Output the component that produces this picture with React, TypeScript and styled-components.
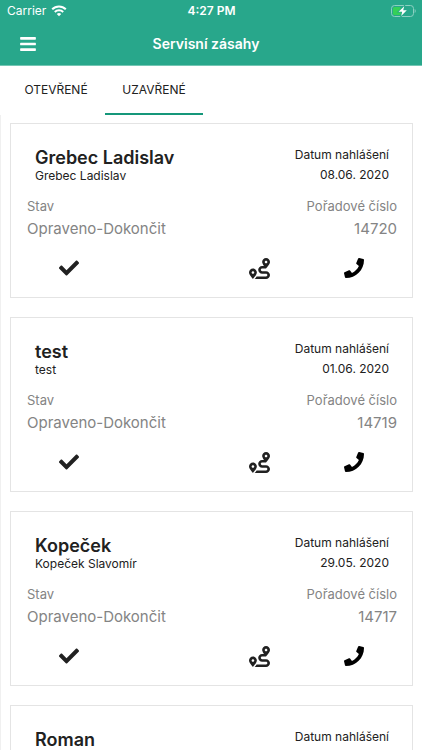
import React, { useState } from "react";
import styled, { createGlobalStyle } from "styled-components";
import { FaBars, FaCheck, FaPhone, FaRoute } from "react-icons/fa";

const GlobalStyle = createGlobalStyle`
  * { box-sizing: border-box; }
  html, body, #root { height: 100%; }
  body {
    margin: 0;
    background: #fff;
    color: #212121;
    font-family: Inter, "Liberation Sans", sans-serif;
  }
  h1, h2, p, dl, dt, dd, ul { margin: 0; padding: 0; }
  button { border: 0; background: none; padding: 0; font: inherit; color: inherit; cursor: pointer; }
`;

const Screen = styled.div`
  display: flex;
  flex-direction: column;
  height: 100vh;
  overflow: hidden;
`;

const Header = styled.header`
  flex: none;
  background: #28a78b;
  border-bottom: 1px solid #74c6b4;
  color: #fff;
`;

const StatusBar = styled.div`
  display: grid;
  grid-template-columns: 1fr auto 1fr;
  align-items: center;
  height: 22px;
  padding: 0 6px 0 7px;
  font-size: 12px;
  line-height: 16px;
`;

const Carrier = styled.div`
  display: flex;
  align-items: center;
  gap: 5px;
`;

const Clock = styled.div`
  font-weight: 600;
`;

const BatteryIcon = styled.svg`
  justify-self: end;
`;

const NavBar = styled.div`
  display: grid;
  grid-template-columns: 56px 1fr 66px;
  align-items: center;
  height: 43px;
`;

const MenuButton = styled.button`
  display: flex;
  align-items: center;
  justify-content: center;
  height: 42px;
`;

const PageTitle = styled.h1`
  text-align: center;
  font-size: 14px;
  line-height: 20px;
  font-weight: 600;
`;

const Tabs = styled.div`
  display: flex;
  flex: none;
  padding-left: 7px;
`;

const Tab = styled.button<{ $active: boolean }>`
  min-width: 98px;
  height: 49px;
  padding: 0 16px;
  border-bottom: 2px solid ${(p) => (p.$active ? "#15977a" : "transparent")};
  font-size: 12px;
  line-height: 16px;
`;

const List = styled.ul`
  flex: 1;
  min-height: 0;
  overflow: hidden;
  display: flex;
  flex-direction: column;
  gap: 19px;
  padding: 8px 9px 8px;
  border-left: 1px solid #f0f0f0;
  list-style: none;
`;

const Card = styled.li`
  flex: none;
  min-height: 175px;
  padding: 21px 15px 15px 16px;
  border: 1px solid #e4e4e4;
`;

const CardHead = styled.div`
  display: flex;
  justify-content: space-between;
  align-items: flex-start;
  padding: 0 8px;
`;

const Name = styled.h2`
  padding-top: 3px;
  font-size: 18px;
  line-height: 20px;
  font-weight: 600;
`;

const Contact = styled.p`
  font-size: 12px;
  line-height: 16px;
`;

const Reported = styled.div`
  text-align: right;
  font-size: 12px;
  line-height: 20px;
`;

const Facts = styled.dl`
  display: flex;
  justify-content: space-between;
  padding-top: 11px;
  color: #848484;
`;

const Fact = styled.div<{ $end?: boolean }>`
  text-align: ${(p) => (p.$end ? "right" : "left")};
`;

const Label = styled.dt`
  font-size: 13px;
  line-height: 20px;
`;

const Value = styled.dd`
  font-size: 15px;
  line-height: 26px;
`;

const Actions = styled.div`
  display: grid;
  grid-template-columns: 84px 1fr 86px;
  padding-top: 12px;
`;

const Action = styled.button<{ $end?: boolean }>`
  display: flex;
  align-items: center;
  justify-content: ${(p) => (p.$end ? "flex-end" : "center")};
  height: 28px;
  padding-right: ${(p) => (p.$end ? "41px" : "0")};
  color: ${(p) => p.color || "#212121"};
`;

type Job = { name: string; contact?: string; date?: string; number?: string };

const jobs: Job[] = [
  { name: "Grebec Ladislav", contact: "Grebec Ladislav", date: "08.06. 2020", number: "14720" },
  { name: "test", contact: "test", date: "01.06. 2020", number: "14719" },
  { name: "Kopeček", contact: "Kopeček Slavomír", date: "29.05. 2020", number: "14717" },
  { name: "Roman" },
];

function Wifi() {
  return (
    <svg width="16" height="12" viewBox="0 0 16 12" fill="none" stroke="#fff" strokeWidth="2" aria-hidden="true">
      <path d="M1.2 4.3a9.6 9.6 0 0 1 13.6 0" />
      <path d="M3.8 7a6 6 0 0 1 8.4 0" />
      <path d="M5.8 9a3.1 3.1 0 0 1 4.4 0L8 11.2Z" fill="#fff" stroke="none" />
    </svg>
  );
}

function Battery() {
  return (
    <BatteryIcon width="25" height="12" viewBox="0 0 25 12" role="img" aria-label="Baterie">
      <rect x=".5" y=".5" width="22" height="11" rx="3" fill="none" stroke="#8dd0c2" />
      <path d="M23.7 4v4c1.3-.5 1.3-3.5 0-4Z" fill="#8dd0c2" />
      <rect x="2" y="2" width="8" height="8" rx="1.5" fill="#35d058" />
      <path d="M13.2 1.2 7.6 6.8h3.6l-1 4.2 5.6-5.8h-3.6Z" fill="#fff" stroke="#28a78b" strokeWidth="1.6" paintOrder="stroke" />
    </BatteryIcon>
  );
}

function JobCard({ job }: { job: Job }) {
  return (
    <Card>
      <CardHead>
        <div>
          <Name>{job.name}</Name>
          {job.contact && <Contact>{job.contact}</Contact>}
        </div>
        <Reported>
          <p>Datum nahlášení</p>
          {job.date && <p>{job.date}</p>}
        </Reported>
      </CardHead>
      {job.number && (
        <>
          <Facts>
            <Fact>
              <Label>Stav</Label>
              <Value>Opraveno-Dokončit</Value>
            </Fact>
            <Fact $end>
              <Label>Pořadové číslo</Label>
              <Value>{job.number}</Value>
            </Fact>
          </Facts>
          <Actions>
            <Action aria-label="Dokončit"><FaCheck size={20} /></Action>
            <Action $end aria-label="Trasa"><FaRoute size={21} /></Action>
            <Action color="#000" aria-label="Zavolat"><FaPhone size={20} /></Action>
          </Actions>
        </>
      )}
    </Card>
  );
}

export default function App() {
  const [active, setActive] = useState("UZAVŘENÉ");
  return (
    <Screen>
      <GlobalStyle />
      <Header>
        <StatusBar>
          <Carrier>Carrier <Wifi /></Carrier>
          <Clock>4:27 PM</Clock>
          <Battery />
        </StatusBar>
        <NavBar>
          <MenuButton aria-label="Nabídka"><FaBars size={18} /></MenuButton>
          <PageTitle>Servisní zásahy</PageTitle>
        </NavBar>
      </Header>
      <Tabs role="tablist">
        {["OTEVŘENÉ", "UZAVŘENÉ"].map((tab) => (
          <Tab key={tab} role="tab" aria-selected={tab === active} $active={tab === active} onClick={() => setActive(tab)}>
            {tab}
          </Tab>
        ))}
      </Tabs>
      <List>
        {jobs.map((job) => <JobCard key={job.name} job={job} />)}
      </List>
    </Screen>
  );
}
